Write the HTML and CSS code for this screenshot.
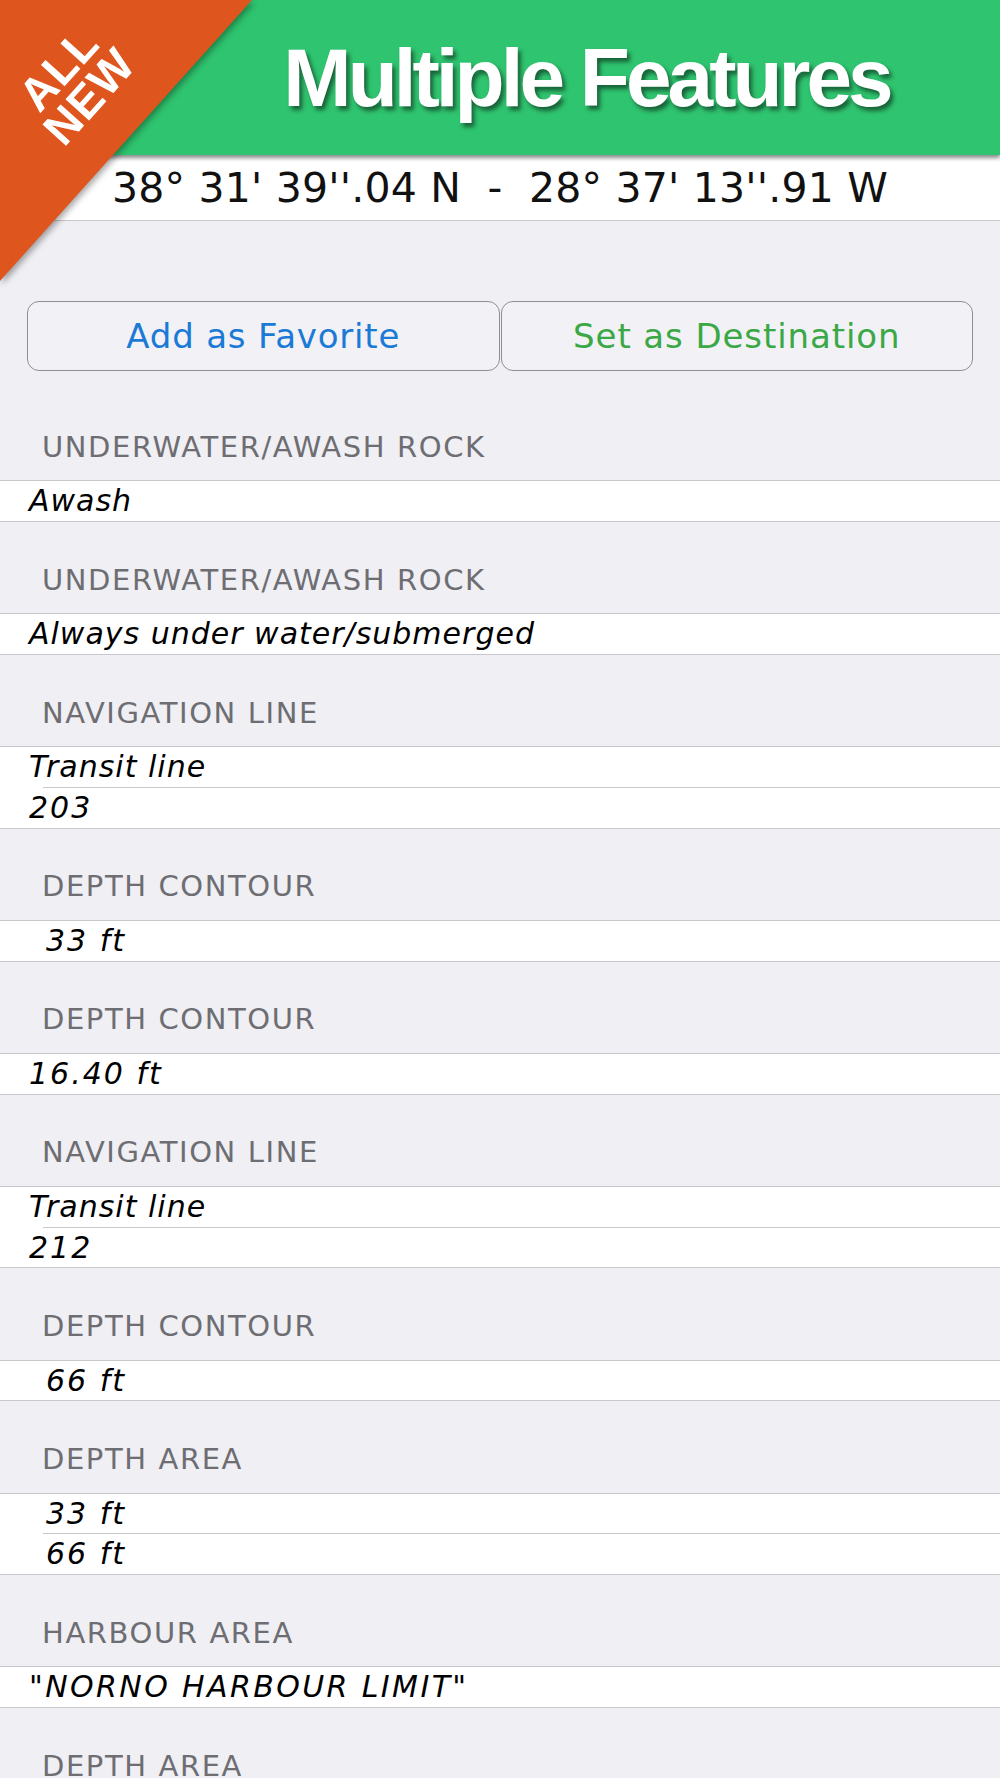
FILE: index.html
```html
<!DOCTYPE html>
<html lang="en">
<head>
<meta charset="utf-8">
<title>Multiple Features</title>
<link rel="stylesheet" href="styles.css">
</head>
<body>
<div class="page">
  <header class="banner"><h1 class="title">Multiple Features</h1></header>
  <div class="coords">38° 31' 39''.04 N  -  28° 37' 13''.91 W</div>
  <div class="actions">
    <button class="btn btn-fav">Add as Favorite</button>
    <button class="btn btn-dest">Set as Destination</button>
  </div>

  <section class="group">
    <h2 class="group-title">UNDERWATER/AWASH ROCK</h2>
    <ul class="cells"><li class="cell">Awash</li></ul>
  </section>
  <section class="group">
    <h2 class="group-title">UNDERWATER/AWASH ROCK</h2>
    <ul class="cells"><li class="cell">Always under water/submerged</li></ul>
  </section>
  <section class="group">
    <h2 class="group-title">NAVIGATION LINE</h2>
    <ul class="cells"><li class="cell">Transit line</li><li class="cell cell-num">203</li></ul>
  </section>
  <section class="group">
    <h2 class="group-title">DEPTH CONTOUR</h2>
    <ul class="cells"><li class="cell cell-num cell-indent">33 ft</li></ul>
  </section>
  <section class="group">
    <h2 class="group-title">DEPTH CONTOUR</h2>
    <ul class="cells"><li class="cell cell-num">16.40 ft</li></ul>
  </section>
  <section class="group">
    <h2 class="group-title">NAVIGATION LINE</h2>
    <ul class="cells"><li class="cell">Transit line</li><li class="cell cell-num">212</li></ul>
  </section>
  <section class="group">
    <h2 class="group-title">DEPTH CONTOUR</h2>
    <ul class="cells"><li class="cell cell-num cell-indent">66 ft</li></ul>
  </section>
  <section class="group">
    <h2 class="group-title">DEPTH AREA</h2>
    <ul class="cells"><li class="cell cell-num cell-indent">33 ft</li><li class="cell cell-num cell-indent">66 ft</li></ul>
  </section>
  <section class="group">
    <h2 class="group-title">HARBOUR AREA</h2>
    <ul class="cells"><li class="cell cell-caps">"NORNO HARBOUR LIMIT"</li></ul>
  </section>
  <section class="group">
    <h2 class="group-title">DEPTH AREA</h2>
    <ul class="cells"><li class="cell cell-num cell-indent">33 ft</li></ul>
  </section>

  <div class="ribbon">
    <div class="ribbon-shape">
      <div class="ribbon-text"><span>ALL</span><span>NEW</span></div>
    </div>
  </div>
</div>
</body>
</html>
```
FILE: styles.css
```css
* {
  box-sizing: border-box;
  margin: 0;
  padding: 0;
}

html,
body {
  background: #efeff4;
}

body {
  width: 1000px;
  height: 1778px;
  overflow: hidden;
  font-family: "DejaVu Sans", "Liberation Sans", sans-serif;
}

.page {
  position: relative;
  width: 1000px;
  height: 1778px;
  overflow: hidden;
}

/* green title banner */
.banner {
  position: relative;
  z-index: 2;
  height: 155px;
  background: #2fc46f;
  box-shadow: 0 3px 4px rgba(0, 0, 0, 0.45);
  display: flex;
  align-items: center;
  justify-content: center;
  padding-left: 173px;
}

.title {
  font-family: "Liberation Sans", Arial, sans-serif;
  font-weight: 700;
  font-size: 82px;
  line-height: 1;
  letter-spacing: -4px;
  color: #fff;
  text-shadow: 3px 4px 4px rgba(0, 0, 0, 0.5);
}

/* coordinate row */
.coords {
  position: relative;
  z-index: 1;
  height: 66px;
  background: #fff;
  border-bottom: 1px solid #c8c7cc;
  display: flex;
  align-items: center;
  justify-content: center;
  font-size: 41px;
  letter-spacing: 0.2px;
  color: #111;
  white-space: pre;
}

/* buttons */
.actions {
  display: flex;
  gap: 1px;
  padding: 80px 27px 17.75px;
}

.btn {
  flex: 1;
  height: 70px;
  border: 1.5px solid #8e8e93;
  border-radius: 12px;
  background: #f1f1f6;
  font-family: "DejaVu Sans", sans-serif;
  font-size: 34px;
}

.btn-fav {
  color: #1a7ad6;
  letter-spacing: 0.8px;
}

.btn-dest {
  color: #3aa845;
  letter-spacing: 0.9px;
}

/* grouped table */
.group-title {
  height: 91.25px;
  padding: 43.75px 0 0 42px;
  font-size: 29px;
  line-height: 29px;
  font-weight: 400;
  letter-spacing: 1.6px;
  color: #6d6d72;
}

.cells {
  list-style: none;
  background: #fff;
  border-top: 1px solid #c8c7cc;
  border-bottom: 1px solid #c8c7cc;
}

.cell {
  height: 39.75px;
  line-height: 39.75px;
  padding-left: 29px;
  font-size: 30px;
  font-style: italic;
  letter-spacing: 1px;
  color: #000;
  white-space: nowrap;
}

.cell + .cell {
  height: 40.75px;
  border-top: 1px solid transparent;
  background: linear-gradient(#c8c7cc, #c8c7cc) 43px 0 / 100% 1px no-repeat border-box;
}

.cell-num {
  letter-spacing: 2px;
}

.cell-caps {
  letter-spacing: 2.4px;
}

.cell-indent {
  padding-left: 46px;
}

/* corner ribbon */
.ribbon {
  position: absolute;
  top: 0;
  left: 0;
  z-index: 3;
  width: 252px;
  height: 281px;
  filter: drop-shadow(2px 3px 3px rgba(0, 0, 0, 0.35));
}

.ribbon-shape {
  width: 100%;
  height: 100%;
  background: #de561e;
  clip-path: polygon(0 0, 100% 0, 0 100%);
  display: flex;
  align-items: center;
  justify-content: center;
  padding: 0 104px 116px 0;
}

.ribbon-text {
  display: flex;
  flex-direction: column;
  align-items: center;
  transform: rotate(-48deg);
  font-family: "Liberation Sans", Arial, sans-serif;
  font-weight: 700;
  font-size: 46px;
  line-height: 41px;
  letter-spacing: 1px;
  color: #fff;
}
```
